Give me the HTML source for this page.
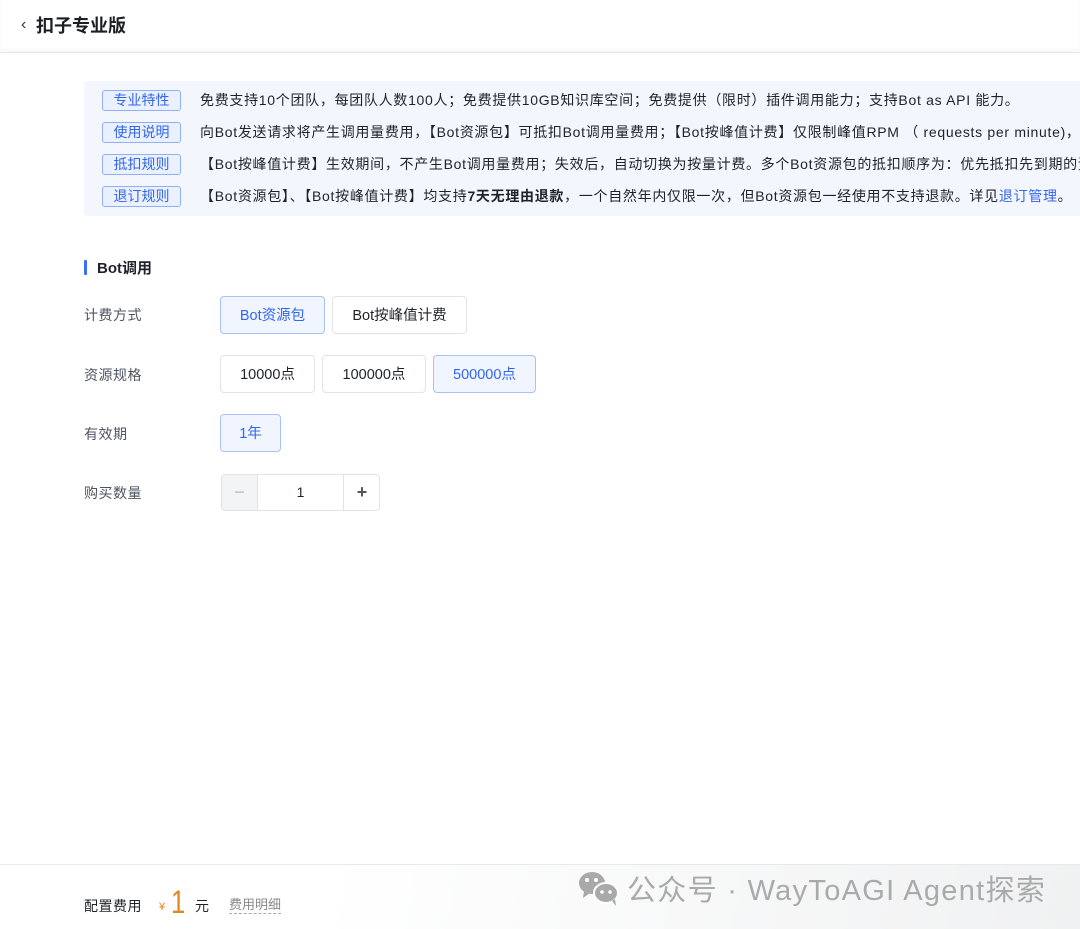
<!DOCTYPE html>
<html><head><meta charset="utf-8"><style>
*{margin:0;padding:0;box-sizing:border-box}
body{width:1080px;height:929px;overflow:hidden;background:#fff;font-family:"Liberation Sans","Noto Sans CJK SC",sans-serif;color:#1f2329;position:relative}
.hdr{position:absolute;left:0;top:0;width:1080px;height:53px;border-bottom:1px solid #e8e9eb;box-shadow:0 -2px 4px rgba(0,0,0,.04) inset}
.hdr .t{position:absolute;left:36px;top:12px;font-size:18px;font-weight:bold;color:#1c1f23}
.hdr .b{position:absolute;left:21px;top:18px;font-size:16px;color:#333;line-height:14px}
.info{position:absolute;left:84px;top:81px;width:1010px;height:135px;background:#f3f6fd;border-radius:4px}
.row{position:absolute;left:0;height:22px;white-space:nowrap;font-size:14px;line-height:22px;color:#1f2329}
.tag{position:absolute;left:18px;top:0;width:79px;height:21px;border:1px solid #8fb0f7;border-radius:3px;background:#eaf0fe;color:#3366ee;font-size:14px;line-height:19px;text-align:center}
.txt{position:absolute;left:116px;top:-1px;letter-spacing:0.7px}
.sec{position:absolute;left:84px;top:257px;font-size:15px;font-weight:bold;color:#1f2329}
.sec:before{content:"";position:absolute;left:0;top:3px;width:3px;height:15px;background:#3a6ff7;border-radius:1px}
.sec span{margin-left:13px}
.lbl{position:absolute;left:84px;font-size:14px;color:#4e5461;letter-spacing:0.5px}
.btn{position:absolute;height:38px;border:1px solid #e1e3e8;border-radius:4px;font-size:14.5px;line-height:38px;text-align:center;color:#1f2329;background:#fff}
.btn.on{border-color:#a9c1fa;background:#f1f5ff;color:#3366ee}
.foot{position:absolute;left:0;top:864px;width:1080px;height:65px;border-top:1px solid #e8e9eb;background:linear-gradient(100deg,#fff 30%,#f0f1f2 100%)}
</style></head><body>
<div class="hdr"><span class="b">‹</span><span class="t">扣子专业版</span></div>
<div class="info">
<div class="row" style="top:9px"><div class="tag">专业特性</div><div class="txt">免费支持10个团队，每团队人数100人；免费提供10GB知识库空间；免费提供（限时）插件调用能力；支持Bot as API 能力。</div></div>
<div class="row" style="top:41px"><div class="tag">使用说明</div><div class="txt">向Bot发送请求将产生调用量费用，【Bot资源包】可抵扣Bot调用量费用；【Bot按峰值计费】仅限制峰值RPM （ requests per minute)，不产生</div></div>
<div class="row" style="top:73px"><div class="tag">抵扣规则</div><div class="txt">【Bot按峰值计费】生效期间，不产生Bot调用量费用；失效后，自动切换为按量计费。多个Bot资源包的抵扣顺序为：优先抵扣先到期的资源包</div></div>
<div class="row" style="top:105px"><div class="tag">退订规则</div><div class="txt">【Bot资源包】、【Bot按峰值计费】均支持<b>7天无理由退款</b>，一个自然年内仅限一次，但Bot资源包一经使用不支持退款。详见<span style="color:#3366ee">退订管理</span>。</div></div>
</div>
<div class="sec"><span>Bot调用</span></div>
<div class="lbl" style="top:305px">计费方式</div>
<div class="btn on" style="left:220px;top:296px;width:105px">Bot资源包</div>
<div class="btn" style="left:332px;top:296px;width:135px">Bot按峰值计费</div>
<div class="lbl" style="top:365px">资源规格</div>
<div class="btn" style="left:220px;top:355px;width:95px">10000点</div>
<div class="btn" style="left:322px;top:355px;width:104px">100000点</div>
<div class="btn on" style="left:433px;top:355px;width:103px">500000点</div>
<div class="lbl" style="top:424px">有效期</div>
<div class="btn on" style="left:220px;top:414px;width:61px">1年</div>
<div class="lbl" style="top:483px">购买数量</div>
<div style="position:absolute;left:221px;top:474px;width:159px;height:37px;border:1px solid #e1e3e8;border-radius:4px;overflow:hidden">
<div style="position:absolute;left:0;top:0;width:36px;height:35px;background:#f3f4f6;border-right:1px solid #e1e3e8;color:#bbb;font-size:18px;text-align:center;line-height:35px">−</div>
<div style="position:absolute;left:36px;top:0;width:85px;height:35px;text-align:center;line-height:35px;font-size:14px">1</div>
<div style="position:absolute;left:121px;top:0;width:37px;height:35px;border-left:1px solid #e1e3e8;text-align:center;line-height:35px;font-size:18px;font-weight:bold;color:#555">+</div>
</div>
<div class="foot">
<div style="position:absolute;left:84px;top:31px;font-size:14px;color:#1f2329;letter-spacing:0.5px">配置费用</div>
<div style="position:absolute;left:159px;top:36px;font-size:11px;color:#e5851f">¥</div>
<div style="position:absolute;left:171px;top:17px;font-size:32px;color:#e5851f;line-height:40px;transform:scaleX(0.8);transform-origin:left">1</div>
<div style="position:absolute;left:195px;top:31px;font-size:14px">元</div>
<div style="position:absolute;left:229px;top:32px;font-size:13px;color:#888;border-bottom:1px dashed #aaa;line-height:16px">费用明细</div>
<svg style="position:absolute;left:578px;top:4px" width="42" height="38" viewBox="0 0 42 38"><ellipse cx="14" cy="14" rx="13" ry="11" fill="#a9a9a9"/><path d="M6 22 L5 29 L12 24Z" fill="#a9a9a9"/><circle cx="9" cy="11" r="2" fill="#fff"/><circle cx="18" cy="11" r="2" fill="#fff"/><ellipse cx="28" cy="24" rx="12" ry="10" fill="#a9a9a9" stroke="#fff" stroke-width="2"/><path d="M34 32 L38 37 L37 30Z" fill="#a9a9a9"/><circle cx="24" cy="23" r="1.8" fill="#fff"/><circle cx="32" cy="23" r="1.8" fill="#fff"/></svg>
<div style="position:absolute;left:627px;top:2px;font-size:29px;color:#aaa;white-space:nowrap;letter-spacing:1.3px">公众号 · WayToAGI Agent探索</div>
</div>
</body></html>
